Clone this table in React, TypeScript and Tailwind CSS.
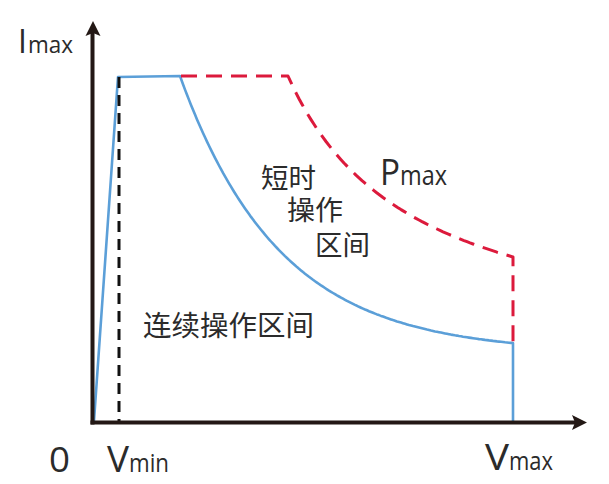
import React from "react";

// origin of the chart axes
const OX = 93;
const OY = 423;

// red Pmax curve: i = 35400 / (v - 69.5) + 65
function redCurvePath(): string {
  let d = "M181 76 L288 76";
  for (let x = 290; x <= 513; x += 3) {
    const v = x - OX;
    const i = 35400 / (v - 69.5) + 65;
    d += ` L${x} ${(OY - i).toFixed(1)}`;
  }
  d += " L513 257 L513 343";
  return d;
}

// blue continuous curve: i = 70 + 661 * exp(-v / 100)
function blueCurvePath(): string {
  let d = "M94 421 L118 77 L180 76";
  for (let x = 181; x <= 513; x += 2) {
    const v = x - OX;
    const i = 70 + 661 * Math.exp(-v / 100);
    d += ` L${x} ${(OY - i).toFixed(1)}`;
  }
  d += " L513 343 L513 423";
  return d;
}

const latin = "fill-[#2b2b2b] font-['Open_Sans','Noto_Sans',sans-serif]";
const cjk = "fill-[#2b2b2b] font-['Noto_Sans_CJK_SC','Noto_Sans',sans-serif]";

export default function App() {
  const red = "#dc1a3c";
  const blue = "#5b9fd8";
  const ink = "#231815";

  return (
    <div className="w-[609px] h-[484px] bg-white overflow-hidden">
      <svg width="609" height="484" viewBox="0 0 609 484" className="block">
        {/* blue operating envelope */}
        <path d={blueCurvePath()} fill="none" stroke={blue} strokeWidth="2.6" strokeLinejoin="round" />

        {/* red dashed Pmax */}
        <path d={redCurvePath()} fill="none" stroke={red} strokeWidth="3" strokeDasharray="16 9" strokeLinejoin="round" />

        {/* black dashed Vmin */}
        <path d="M119 77 L119 421" fill="none" stroke="#111" strokeWidth="3" strokeDasharray="11 7" />

        {/* axes */}
        <path d="M92.5 424.5 L92.5 32" stroke={ink} strokeWidth="4" fill="none" />
        <path d="M93 21 L100.5 36 L93 33 L85.5 36 Z" fill={ink} />
        <path d="M90.5 422.5 L576 422.5" stroke={ink} strokeWidth="4" fill="none" />
        <path d="M587 422.5 L572 430 L575 422.5 L572 415 Z" fill={ink} />

        {/* labels */}
        <text x="18" y="53" className={latin} fontSize="32">I</text>
        <text x="28" y="53" className={latin} fontSize="24" textLength="45" lengthAdjust="spacingAndGlyphs">max</text>

        <text x="49" y="472" className={latin} fontSize="35" textLength="21" lengthAdjust="spacingAndGlyphs">0</text>
        <text x="107" y="472" className={latin} fontSize="36" textLength="22" lengthAdjust="spacingAndGlyphs">V</text>
        <text x="129" y="472" className={latin} fontSize="26" textLength="40" lengthAdjust="spacingAndGlyphs">min</text>

        <text x="485" y="470" className={latin} fontSize="36" textLength="24" lengthAdjust="spacingAndGlyphs">V</text>
        <text x="509" y="470" className={latin} fontSize="26" textLength="44" lengthAdjust="spacingAndGlyphs">max</text>

        <text x="380" y="185" className={latin} fontSize="37" textLength="20" lengthAdjust="spacingAndGlyphs">P</text>
        <text x="400" y="185" className={latin} fontSize="27" textLength="47" lengthAdjust="spacingAndGlyphs">max</text>

        <text x="261" y="188" className={cjk} fontSize="27" textLength="55" lengthAdjust="spacingAndGlyphs">短时</text>
        <text x="287" y="220" className={cjk} fontSize="27" textLength="56" lengthAdjust="spacingAndGlyphs">操作</text>
        <text x="315" y="255" className={cjk} fontSize="27" textLength="55" lengthAdjust="spacingAndGlyphs">区间</text>

        <text x="143" y="336" className={cjk} fontSize="28" textLength="171" lengthAdjust="spacingAndGlyphs">连续操作区间</text>
      </svg>
    </div>
  );
}
